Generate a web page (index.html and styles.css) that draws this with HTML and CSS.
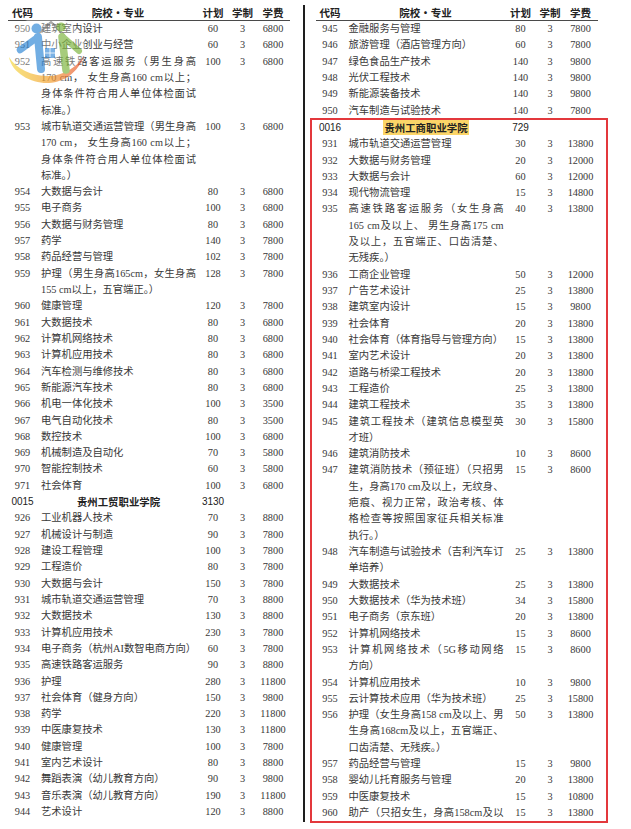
FILE: index.html
```html
<!DOCTYPE html>
<html lang="zh-CN">
<head>
<meta charset="utf-8">
<title>招生计划</title>
<link rel="stylesheet" href="styles.css">
</head>
<body>
<div class="page">
  <div class="col">
    <div class="head"><span>代码</span><span>院校·专业</span><span>计划</span><span>学制</span><span>学费</span></div>
    <div class="row"><span class="c">950</span><span class="n">建筑室内设计</span><span class="p">60</span><span class="y">3</span><span class="f">6800</span></div>
    <div class="row"><span class="c">951</span><span class="n">中小企业创业与经营</span><span class="p">60</span><span class="y">3</span><span class="f">6800</span></div>
    <div class="row"><span class="c">952</span><span class="n"><span class="j">高速铁路客运服务（男生身高</span><span class="j">170 cm， 女生身高160 cm以上；</span><span class="j">身体条件符合用人单位体检面试</span>标准。）</span><span class="p">100</span><span class="y">3</span><span class="f">6800</span></div>
    <div class="row"><span class="c">953</span><span class="n"><span class="j">城市轨道交通运营管理（男生身高</span><span class="j">170 cm， 女生身高160 cm以上；</span><span class="j">身体条件符合用人单位体检面试</span>标准。）</span><span class="p">100</span><span class="y">3</span><span class="f">6800</span></div>
    <div class="row"><span class="c">954</span><span class="n">大数据与会计</span><span class="p">80</span><span class="y">3</span><span class="f">6800</span></div>
    <div class="row"><span class="c">955</span><span class="n">电子商务</span><span class="p">100</span><span class="y">3</span><span class="f">6800</span></div>
    <div class="row"><span class="c">956</span><span class="n">大数据与财务管理</span><span class="p">80</span><span class="y">3</span><span class="f">6800</span></div>
    <div class="row"><span class="c">957</span><span class="n">药学</span><span class="p">140</span><span class="y">3</span><span class="f">7800</span></div>
    <div class="row"><span class="c">958</span><span class="n">药品经营与管理</span><span class="p">102</span><span class="y">3</span><span class="f">7800</span></div>
    <div class="row"><span class="c">959</span><span class="n"><span class="j">护理（男生身高165cm，女生身高</span>155 cm以上，五官端正。）</span><span class="p">128</span><span class="y">3</span><span class="f">7800</span></div>
    <div class="row"><span class="c">960</span><span class="n">健康管理</span><span class="p">120</span><span class="y">3</span><span class="f">7800</span></div>
    <div class="row"><span class="c">961</span><span class="n">大数据技术</span><span class="p">80</span><span class="y">3</span><span class="f">6800</span></div>
    <div class="row"><span class="c">962</span><span class="n">计算机网络技术</span><span class="p">80</span><span class="y">3</span><span class="f">6800</span></div>
    <div class="row"><span class="c">963</span><span class="n">计算机应用技术</span><span class="p">80</span><span class="y">3</span><span class="f">6800</span></div>
    <div class="row"><span class="c">964</span><span class="n">汽车检测与维修技术</span><span class="p">80</span><span class="y">3</span><span class="f">6800</span></div>
    <div class="row"><span class="c">965</span><span class="n">新能源汽车技术</span><span class="p">80</span><span class="y">3</span><span class="f">6800</span></div>
    <div class="row"><span class="c">966</span><span class="n">机电一体化技术</span><span class="p">100</span><span class="y">3</span><span class="f">3500</span></div>
    <div class="row"><span class="c">967</span><span class="n">电气自动化技术</span><span class="p">80</span><span class="y">3</span><span class="f">3500</span></div>
    <div class="row"><span class="c">968</span><span class="n">数控技术</span><span class="p">100</span><span class="y">3</span><span class="f">6800</span></div>
    <div class="row"><span class="c">969</span><span class="n">机械制造及自动化</span><span class="p">70</span><span class="y">3</span><span class="f">5800</span></div>
    <div class="row"><span class="c">970</span><span class="n">智能控制技术</span><span class="p">60</span><span class="y">3</span><span class="f">5800</span></div>
    <div class="row"><span class="c">971</span><span class="n">社会体育</span><span class="p">100</span><span class="y">3</span><span class="f">6800</span></div>
    <div class="row school"><span class="c">0015</span><span class="n">贵州工贸职业学院</span><span class="p">3130</span><span class="y"></span><span class="f"></span></div>
    <div class="row"><span class="c">926</span><span class="n">工业机器人技术</span><span class="p">70</span><span class="y">3</span><span class="f">8800</span></div>
    <div class="row"><span class="c">927</span><span class="n">机械设计与制造</span><span class="p">90</span><span class="y">3</span><span class="f">7800</span></div>
    <div class="row"><span class="c">928</span><span class="n">建设工程管理</span><span class="p">100</span><span class="y">3</span><span class="f">7800</span></div>
    <div class="row"><span class="c">929</span><span class="n">工程造价</span><span class="p">80</span><span class="y">3</span><span class="f">7800</span></div>
    <div class="row"><span class="c">930</span><span class="n">大数据与会计</span><span class="p">150</span><span class="y">3</span><span class="f">7800</span></div>
    <div class="row"><span class="c">931</span><span class="n">城市轨道交通运营管理</span><span class="p">70</span><span class="y">3</span><span class="f">8800</span></div>
    <div class="row"><span class="c">932</span><span class="n">大数据技术</span><span class="p">130</span><span class="y">3</span><span class="f">8800</span></div>
    <div class="row"><span class="c">933</span><span class="n">计算机应用技术</span><span class="p">230</span><span class="y">3</span><span class="f">7800</span></div>
    <div class="row"><span class="c">934</span><span class="n">电子商务（杭州AI数智电商方向）</span><span class="p">60</span><span class="y">3</span><span class="f">7800</span></div>
    <div class="row"><span class="c">935</span><span class="n">高速铁路客运服务</span><span class="p">90</span><span class="y">3</span><span class="f">8800</span></div>
    <div class="row"><span class="c">936</span><span class="n">护理</span><span class="p">280</span><span class="y">3</span><span class="f">11800</span></div>
    <div class="row"><span class="c">937</span><span class="n">社会体育（健身方向）</span><span class="p">150</span><span class="y">3</span><span class="f">9800</span></div>
    <div class="row"><span class="c">938</span><span class="n">药学</span><span class="p">220</span><span class="y">3</span><span class="f">11800</span></div>
    <div class="row"><span class="c">939</span><span class="n">中医康复技术</span><span class="p">130</span><span class="y">3</span><span class="f">11800</span></div>
    <div class="row"><span class="c">940</span><span class="n">健康管理</span><span class="p">100</span><span class="y">3</span><span class="f">7800</span></div>
    <div class="row"><span class="c">941</span><span class="n">室内艺术设计</span><span class="p">80</span><span class="y">3</span><span class="f">8800</span></div>
    <div class="row"><span class="c">942</span><span class="n">舞蹈表演（幼儿教育方向）</span><span class="p">90</span><span class="y">3</span><span class="f">9800</span></div>
    <div class="row"><span class="c">943</span><span class="n">音乐表演（幼儿教育方向）</span><span class="p">190</span><span class="y">3</span><span class="f">11800</span></div>
    <div class="row"><span class="c">944</span><span class="n">艺术设计</span><span class="p">120</span><span class="y">3</span><span class="f">8800</span></div>
  </div>

  <div class="divider"></div>

  <div class="col">
    <div class="head"><span>代码</span><span>院校·专业</span><span>计划</span><span>学制</span><span>学费</span></div>
    <div class="row"><span class="c">945</span><span class="n">金融服务与管理</span><span class="p">80</span><span class="y">3</span><span class="f">7800</span></div>
    <div class="row"><span class="c">946</span><span class="n">旅游管理（酒店管理方向）</span><span class="p">60</span><span class="y">3</span><span class="f">7800</span></div>
    <div class="row"><span class="c">947</span><span class="n">绿色食品生产技术</span><span class="p">140</span><span class="y">3</span><span class="f">9800</span></div>
    <div class="row"><span class="c">948</span><span class="n">光伏工程技术</span><span class="p">140</span><span class="y">3</span><span class="f">9800</span></div>
    <div class="row"><span class="c">949</span><span class="n">新能源装备技术</span><span class="p">140</span><span class="y">3</span><span class="f">9800</span></div>
    <div class="row"><span class="c">950</span><span class="n">汽车制造与试验技术</span><span class="p">140</span><span class="y">3</span><span class="f">7800</span></div>
    <div class="box">
      <div class="row school"><span class="c">0016</span><span class="n"><mark class="hl">贵州工商职业学院</mark></span><span class="p">729</span><span class="y"></span><span class="f"></span></div>
      <div class="row"><span class="c">931</span><span class="n">城市轨道交通运营管理</span><span class="p">30</span><span class="y">3</span><span class="f">13800</span></div>
      <div class="row"><span class="c">932</span><span class="n">大数据与财务管理</span><span class="p">20</span><span class="y">3</span><span class="f">12000</span></div>
      <div class="row"><span class="c">933</span><span class="n">大数据与会计</span><span class="p">60</span><span class="y">3</span><span class="f">12000</span></div>
      <div class="row"><span class="c">934</span><span class="n">现代物流管理</span><span class="p">15</span><span class="y">3</span><span class="f">14800</span></div>
      <div class="row"><span class="c">935</span><span class="n"><span class="j">高速铁路客运服务（女生身高</span><span class="j">165 cm及以上、 男生身高175 cm</span><span class="j">及以上，五官端正、口齿清楚、</span>无残疾。）</span><span class="p">40</span><span class="y">3</span><span class="f">13800</span></div>
      <div class="row"><span class="c">936</span><span class="n">工商企业管理</span><span class="p">50</span><span class="y">3</span><span class="f">12000</span></div>
      <div class="row"><span class="c">937</span><span class="n">广告艺术设计</span><span class="p">25</span><span class="y">3</span><span class="f">13800</span></div>
      <div class="row"><span class="c">938</span><span class="n">建筑室内设计</span><span class="p">15</span><span class="y">3</span><span class="f">9800</span></div>
      <div class="row"><span class="c">939</span><span class="n">社会体育</span><span class="p">20</span><span class="y">3</span><span class="f">13800</span></div>
      <div class="row"><span class="c">940</span><span class="n">社会体育（体育指导与管理方向）</span><span class="p">15</span><span class="y">3</span><span class="f">13800</span></div>
      <div class="row"><span class="c">941</span><span class="n">室内艺术设计</span><span class="p">20</span><span class="y">3</span><span class="f">13800</span></div>
      <div class="row"><span class="c">942</span><span class="n">道路与桥梁工程技术</span><span class="p">20</span><span class="y">3</span><span class="f">13800</span></div>
      <div class="row"><span class="c">943</span><span class="n">工程造价</span><span class="p">25</span><span class="y">3</span><span class="f">13800</span></div>
      <div class="row"><span class="c">944</span><span class="n">建筑工程技术</span><span class="p">35</span><span class="y">3</span><span class="f">13800</span></div>
      <div class="row"><span class="c">945</span><span class="n"><span class="j">建筑工程技术（建筑信息模型英</span>才班）</span><span class="p">30</span><span class="y">3</span><span class="f">15800</span></div>
      <div class="row"><span class="c">946</span><span class="n">建筑消防技术</span><span class="p">10</span><span class="y">3</span><span class="f">8600</span></div>
      <div class="row"><span class="c">947</span><span class="n"><span class="j">建筑消防技术（预征班）（只招男</span><span class="j">生，身高170 cm及以上，无纹身、</span><span class="j">疤痕、视力正常，政治考核、体</span><span class="j">格检查等按照国家征兵相关标准</span>执行。）</span><span class="p">15</span><span class="y">3</span><span class="f">8600</span></div>
      <div class="row"><span class="c">948</span><span class="n"><span class="j">汽车制造与试验技术（吉利汽车订</span>单培养）</span><span class="p">25</span><span class="y">3</span><span class="f">13800</span></div>
      <div class="row"><span class="c">949</span><span class="n">大数据技术</span><span class="p">25</span><span class="y">3</span><span class="f">13800</span></div>
      <div class="row"><span class="c">950</span><span class="n">大数据技术（华为技术班）</span><span class="p">34</span><span class="y">3</span><span class="f">15800</span></div>
      <div class="row"><span class="c">951</span><span class="n">电子商务（京东班）</span><span class="p">20</span><span class="y">3</span><span class="f">13800</span></div>
      <div class="row"><span class="c">952</span><span class="n">计算机网络技术</span><span class="p">15</span><span class="y">3</span><span class="f">8600</span></div>
      <div class="row"><span class="c">953</span><span class="n"><span class="j">计算机网络技术（5G移动网络</span>方向）</span><span class="p">15</span><span class="y">3</span><span class="f">8600</span></div>
      <div class="row"><span class="c">954</span><span class="n">计算机应用技术</span><span class="p">10</span><span class="y">3</span><span class="f">9800</span></div>
      <div class="row"><span class="c">955</span><span class="n">云计算技术应用（华为技术班）</span><span class="p">25</span><span class="y">3</span><span class="f">15800</span></div>
      <div class="row"><span class="c">956</span><span class="n"><span class="j">护理（女生身高158 cm及以上、男</span><span class="j">生身高168cm及以上，五官端正、</span>口齿清楚、无残疾。）</span><span class="p">50</span><span class="y">3</span><span class="f">13800</span></div>
      <div class="row"><span class="c">957</span><span class="n">药品经营与管理</span><span class="p">15</span><span class="y">3</span><span class="f">9800</span></div>
      <div class="row"><span class="c">958</span><span class="n">婴幼儿托育服务与管理</span><span class="p">20</span><span class="y">3</span><span class="f">13800</span></div>
      <div class="row"><span class="c">959</span><span class="n">中医康复技术</span><span class="p">15</span><span class="y">3</span><span class="f">10800</span></div>
      <div class="row"><span class="c">960</span><span class="n"><span class="j">助产（只招女生，身高158cm及以</span></span><span class="p">15</span><span class="y">3</span><span class="f">13800</span></div>
    </div>
  </div>

  <svg class="logo" width="92" height="92" viewBox="0 0 92 92" aria-hidden="true">
    <defs>
      <linearGradient id="arc" x1="0" y1="0" x2="1" y2="0">
        <stop offset="0" stop-color="#f6dc4a"/>
        <stop offset="0.55" stop-color="#f3a43a"/>
        <stop offset="1" stop-color="#e9583c"/>
      </linearGradient>
    </defs>
    <ellipse cx="46" cy="50" rx="40" ry="34" fill="#fff" opacity="0.45"/>
    <path d="M9,57 C12,74 33,84 49,83 C65,82 78,72 84,56 C76,68 63,76 48,76 C32,76 16,69 9,57 Z" fill="url(#arc)"/>
    <path d="M37,35 L51,22 L64,35" fill="none" stroke="#8a8a8a" stroke-width="2.2" stroke-linejoin="round"/>
    <g fill="#4a95dc">
      <rect x="45" y="48" width="4.6" height="4.6"/>
      <rect x="50.4" y="48" width="4.6" height="4.6"/>
      <rect x="45" y="53.4" width="4.6" height="4.6"/>
      <rect x="50.4" y="53.4" width="4.6" height="4.6"/>
    </g>
    <circle cx="36.5" cy="28.5" r="5" fill="#3d8fd9"/>
    <path d="M20,50 L38,37" stroke="#3d8fd9" stroke-width="6.5" stroke-linecap="round"/>
    <path d="M38,37 L41,69" stroke="#3d8fd9" stroke-width="8" stroke-linecap="round"/>
    <circle cx="61" cy="27" r="4.6" fill="#84b94a"/>
    <path d="M62,36 L79,51" stroke="#84b94a" stroke-width="6" stroke-linecap="round"/>
    <path d="M62,37 L66,70" stroke="#84b94a" stroke-width="7.5" stroke-linecap="round"/>
  </svg>
</div>
</body>
</html>
```

FILE: styles.css
```css
html, body {
  margin: 0;
  padding: 0;
  background: #ffffff;
}

.page {
  position: relative;
  display: flex;
  align-items: stretch;
  padding-left: 8px;
  font-family: "Liberation Serif", "Noto Sans CJK SC", serif;
  color: #383838;
}

.col {
  width: 282px;
  flex: 0 0 282px;
}

.divider {
  width: 1.5px;
  flex: 0 0 1.5px;
  background: #1e1e1e;
  margin: 5px 11px 1px 13px;
}

.head,
.row {
  display: grid;
  grid-template-columns: 29px 162px 28px 31px 30px 2px;
}

.head {
  height: 14px;
  padding-top: 6px;
  line-height: 14px;
  border-bottom: 1px solid #4a4a4a;
  font-family: "Noto Sans CJK SC", "Liberation Sans", sans-serif;
  font-weight: 700;
  font-size: 10.5px;
  color: #222;
  text-align: center;
}

.row {
  font-size: 10.3px;
  line-height: 16.31px;
}

.c, .p, .y, .f {
  text-align: center;
  white-space: nowrap;
}

.n {
  padding: 0 3px 0 4px;
  white-space: nowrap;
}

.j {
  display: block;
  text-align: justify;
  text-align-last: justify;
}

.school .c,
.school .p {
  font-family: "Liberation Sans", "Noto Sans CJK SC", sans-serif;
  font-size: 10px;
  color: #222;
}

.school .n {
  text-align: center;
  font-family: "Noto Sans CJK SC", "Liberation Sans", sans-serif;
  font-weight: 700;
  font-size: 10.4px;
  color: #222;
}

.hl {
  background: #fbd568;
  color: #222;
  padding: 0 1px;
}

.box {
  border: 2px solid #e3383c;
  margin: -1px -10px 0 -6px;
  padding: 0 8px 0 4px;
}

.logo {
  position: absolute;
  left: 0;
  top: 0;
  opacity: 0.72;
  pointer-events: none;
}
```
